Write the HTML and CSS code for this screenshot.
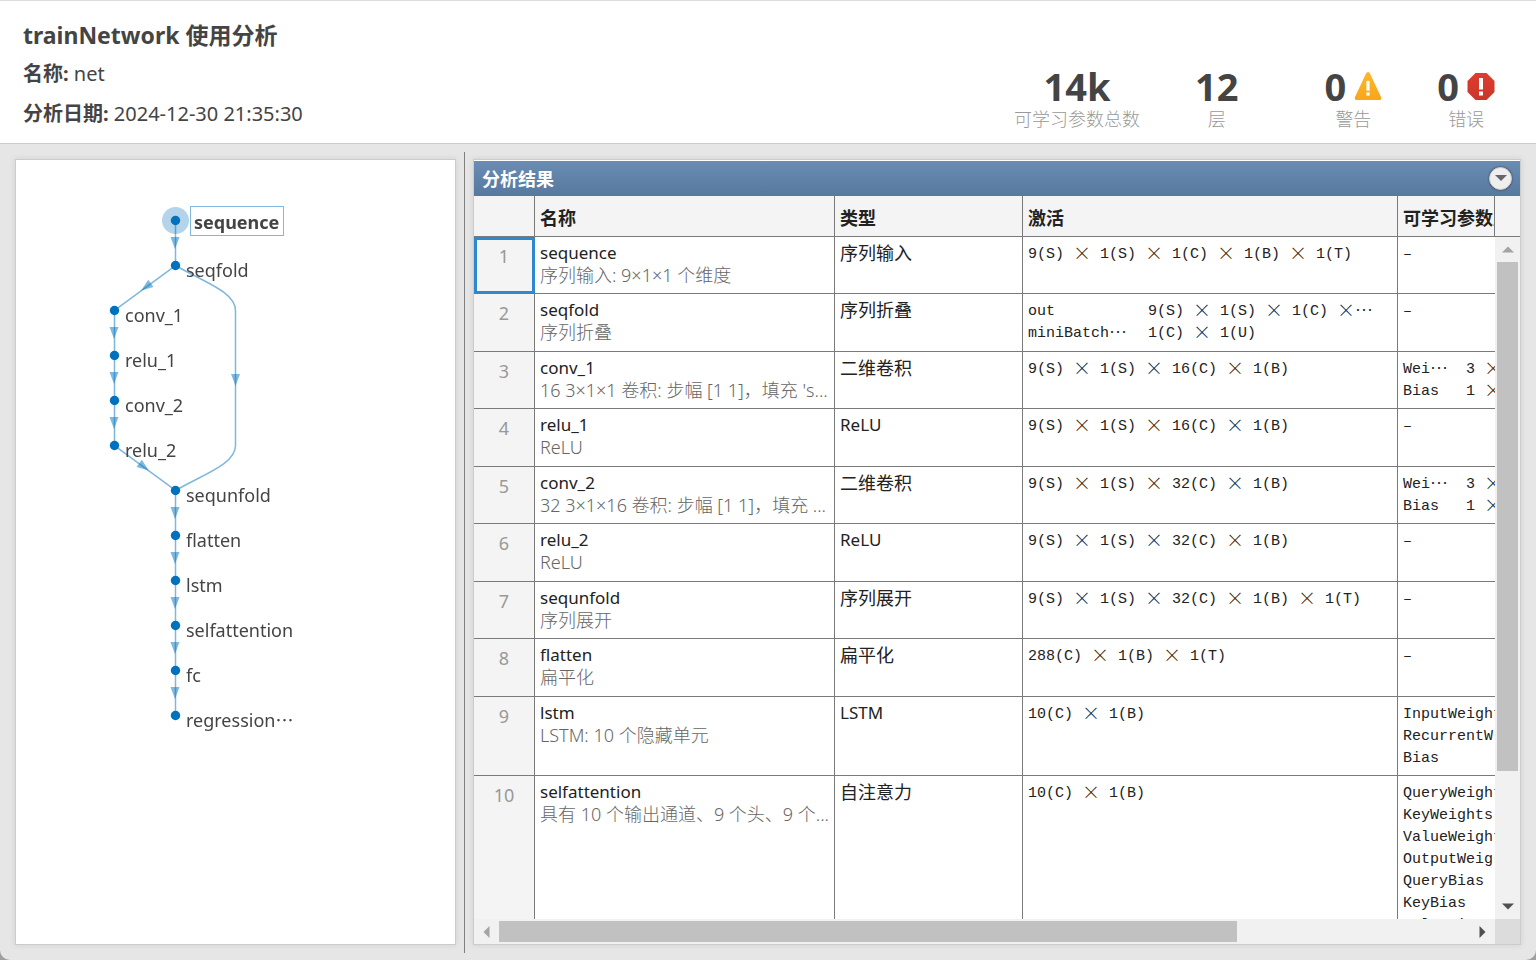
FILE: index.html
```html
<!DOCTYPE html>
<html lang="zh-CN">
<head>
  <meta charset="UTF-8">
  <title>trainNetwork 使用分析</title>
  <link rel="stylesheet" href="styles.css">
</head>
<body>
  <header class="page-header">
    <div class="info">
      <h1>trainNetwork 使用分析</h1>
      <p><b>名称:</b> net</p>
      <p><b>分析日期:</b> 2024-12-30 21:35:30</p>
    </div>
    <div class="stats">
      <div class="stat">
        <div class="stat-value">14k</div>
        <div class="stat-label">可学习参数总数</div>
      </div>
      <div class="stat">
        <div class="stat-value">12</div>
        <div class="stat-label">层</div>
      </div>
      <div class="stat stat-issues">
        <div class="stat-value">0
          <svg width="28" height="30" viewBox="0 0 28 30">
            <defs><linearGradient id="warn" x1="0" y1="0" x2="0" y2="1"><stop offset="0" stop-color="#fbb829"/><stop offset="1" stop-color="#fba51b"/></linearGradient></defs>
            <path d="M14 1q1.200 0 2 1.500L27 26q1 3-1.500 3h-23Q0 29 1 26L12 2.500Q12.800 1 14 1z" fill="url(#warn)"/>
            <path d="M12.500 10h3v9.500h-3zM12.500 21.500h3v3h-3z" fill="#fff" stroke="#fde3a8" stroke-width=".6"/>
          </svg>
        </div>
        <div class="stat-label">警告</div>
      </div>
      <div class="stat">
        <div class="stat-value">0
          <svg width="28" height="30" viewBox="0 0 28 30">
            <defs><linearGradient id="err" x1="0" y1="0" x2="0" y2="1"><stop offset="0" stop-color="#e03c2e"/><stop offset="1" stop-color="#c8372b"/></linearGradient></defs>
            <path d="M8.500 2h11L27.500 10v11l-8 8h-11l-8-8V10z" fill="url(#err)"/>
            <path d="M12 7h4v11.500h-4zM12 20.500h4v4h-4z" fill="#fff"/>
          </svg>
        </div>
        <div class="stat-label">错误</div>
      </div>
    </div>
  </header>

  <main class="content">
    <section class="graph-panel">
      <svg class="graph" width="360" height="620" viewBox="0 0 360 620">
        <defs>
          <path id="arrow" d="M-4.500-6h9L0 6z"/>
        </defs>
        <circle class="halo" cx="159.500" cy="60.500" r="13.500"/>
        <g class="edges">
          <path d="M159.500 60.500v45L98.500 150.500v135l61 45v225"/>
          <path d="M159.500 105.500C188 122 219.500 132 219.500 150.500v135C219.500 304 188 314 159.500 330.500"/>
        </g>
        <g class="arrows">
          <use href="#arrow" x="159" y="83"/>
          <use href="#arrow" transform="translate(130 127) rotate(54)"/>
          <use href="#arrow" x="98" y="173"/>
          <use href="#arrow" x="98" y="218"/>
          <use href="#arrow" x="98" y="263"/>
          <use href="#arrow" transform="translate(128 307) rotate(-54)"/>
          <use href="#arrow" x="219.500" y="220"/>
          <use href="#arrow" x="159" y="353"/>
          <use href="#arrow" x="159" y="398"/>
          <use href="#arrow" x="159" y="443"/>
          <use href="#arrow" x="159" y="488"/>
          <use href="#arrow" x="159" y="533"/>
        </g>
        <g class="nodes">
          <circle cx="159.500" cy="60.500" r="4.700"/>
          <circle cx="159.500" cy="105.500" r="4.700"/>
          <circle cx="98.500" cy="150.500" r="4.700"/>
          <circle cx="98.500" cy="195.500" r="4.700"/>
          <circle cx="98.500" cy="240.500" r="4.700"/>
          <circle cx="98.500" cy="285.500" r="4.700"/>
          <circle cx="159.500" cy="330.500" r="4.700"/>
          <circle cx="159.500" cy="375.500" r="4.700"/>
          <circle cx="159.500" cy="420.500" r="4.700"/>
          <circle cx="159.500" cy="465.500" r="4.700"/>
          <circle cx="159.500" cy="510.500" r="4.700"/>
          <circle cx="159.500" cy="555.500" r="4.700"/>
        </g>
        <rect class="label-box" x="174.500" y="46.500" width="93" height="29"/>
        <g class="labels">
          <text class="selected" x="178" y="69">sequence</text>
          <text x="170" y="117">seqfold</text>
          <text x="109" y="162">conv_1</text>
          <text x="109" y="207">relu_1</text>
          <text x="109" y="252">conv_2</text>
          <text x="109" y="297">relu_2</text>
          <text x="170" y="342">sequnfold</text>
          <text x="170" y="387">flatten</text>
          <text x="170" y="432">lstm</text>
          <text x="170" y="477">selfattention</text>
          <text x="170" y="522">fc</text>
          <text x="170" y="567">regression<tspan class="dots">…</tspan></text>
        </g>
      </svg>
    </section>

    <div class="splitter"></div>

    <section class="result-panel">
      <div class="result-title">
        <h2>分析结果</h2>
        <button class="menu-btn" aria-label="菜单"><svg width="12" height="7" viewBox="0 0 12 7"><path d="M0 0h12L6 6z" fill="#666"/></svg></button>
      </div>
      <div class="result-grid">
        <div class="table-view">
          <table>
            <colgroup><col class="c-num"><col class="c-name"><col class="c-type"><col class="c-act"><col class="c-learn"></colgroup>
            <thead>
              <tr><th></th><th>名称</th><th>类型</th><th>激活</th><th>可学习参数属性</th></tr>
            </thead>
            <tbody>
              <tr>
                <td class="num active">1</td>
                <td class="latin">sequence<small>序列输入: 9×1×1 个维度</small></td>
                <td>序列输入</td>
                <td class="mono">9(S) <i>×</i> 1(S) <i>×</i> 1(C) <i>×</i> 1(B) <i>×</i> 1(T)</td>
                <td class="mono">–</td>
              </tr>
              <tr>
                <td class="num">2</td>
                <td class="latin">seqfold<small>序列折叠</small></td>
                <td>序列折叠</td>
                <td class="mono">
                  <div class="pair"><span>out</span><span>9(S) <i>×</i> 1(S) <i>×</i> 1(C) <i>×</i><i>…</i></span></div>
                  <div class="pair"><span>miniBatch<i>…</i></span><span>1(C) <i>×</i> 1(U)</span></div>
                </td>
                <td class="mono">–</td>
              </tr>
              <tr>
                <td class="num">3</td>
                <td class="latin">conv_1<small>16 3×1×1 卷积: 步幅 [1 1]，填充 's...</small></td>
                <td>二维卷积</td>
                <td class="mono">9(S) <i>×</i> 1(S) <i>×</i> 16(C) <i>×</i> 1(B)</td>
                <td class="mono">
                  <div class="pair short"><span>Wei<i>…</i></span><span>3 <i>×</i> 1</span></div>
                  <div class="pair short"><span>Bias</span><span>1 <i>×</i> 1</span></div>
                </td>
              </tr>
              <tr>
                <td class="num">4</td>
                <td class="latin">relu_1<small>ReLU</small></td>
                <td class="latin">ReLU</td>
                <td class="mono">9(S) <i>×</i> 1(S) <i>×</i> 16(C) <i>×</i> 1(B)</td>
                <td class="mono">–</td>
              </tr>
              <tr>
                <td class="num">5</td>
                <td class="latin">conv_2<small>32 3×1×16 卷积: 步幅 [1 1]，填充 ...</small></td>
                <td>二维卷积</td>
                <td class="mono">9(S) <i>×</i> 1(S) <i>×</i> 32(C) <i>×</i> 1(B)</td>
                <td class="mono">
                  <div class="pair short"><span>Wei<i>…</i></span><span>3 <i>×</i> 1</span></div>
                  <div class="pair short"><span>Bias</span><span>1 <i>×</i> 1</span></div>
                </td>
              </tr>
              <tr>
                <td class="num">6</td>
                <td class="latin">relu_2<small>ReLU</small></td>
                <td class="latin">ReLU</td>
                <td class="mono">9(S) <i>×</i> 1(S) <i>×</i> 32(C) <i>×</i> 1(B)</td>
                <td class="mono">–</td>
              </tr>
              <tr>
                <td class="num">7</td>
                <td class="latin">sequnfold<small>序列展开</small></td>
                <td>序列展开</td>
                <td class="mono">9(S) <i>×</i> 1(S) <i>×</i> 32(C) <i>×</i> 1(B) <i>×</i> 1(T)</td>
                <td class="mono">–</td>
              </tr>
              <tr>
                <td class="num">8</td>
                <td class="latin">flatten<small>扁平化</small></td>
                <td>扁平化</td>
                <td class="mono">288(C) <i>×</i> 1(B) <i>×</i> 1(T)</td>
                <td class="mono">–</td>
              </tr>
              <tr>
                <td class="num">9</td>
                <td class="latin">lstm<small>LSTM: 10 个隐藏单元</small></td>
                <td class="latin">LSTM</td>
                <td class="mono">10(C) <i>×</i> 1(B)</td>
                <td class="mono">InputWeights<br>RecurrentW<i>…</i><br>Bias</td>
              </tr>
              <tr>
                <td class="num">10</td>
                <td class="latin">selfattention<small>具有 10 个输出通道、9 个头、9 个...</small></td>
                <td>自注意力</td>
                <td class="mono">10(C) <i>×</i> 1(B)</td>
                <td class="mono">QueryWeights<br>KeyWeights<br>ValueWeights<br>OutputWeig<i>…</i><br>QueryBias<br>KeyBias<br>ValueBias<br>OutputBias</td>
              </tr>
            </tbody>
          </table>
        </div>
        <div class="head-filler"></div>
        <div class="vscroll">
          <button aria-label="向上滚动"><svg width="12" height="7" viewBox="0 0 12 7"><path d="M0 6.500h12L6 .5z" fill="#a3a3a3"/></svg></button>
          <div class="track"><div class="thumb"></div></div>
          <button aria-label="向下滚动"><svg width="12" height="7" viewBox="0 0 12 7"><path d="M0 .5h12L6 6.500z" fill="#505050"/></svg></button>
        </div>
        <div class="hscroll">
          <button aria-label="向左滚动"><svg width="7" height="12" viewBox="0 0 7 12"><path d="M6.500 0v12L.5 6z" fill="#a3a3a3"/></svg></button>
          <div class="track"><div class="thumb"></div></div>
          <button aria-label="向右滚动"><svg width="7" height="12" viewBox="0 0 7 12"><path d="M.5 0v12l6-6z" fill="#505050"/></svg></button>
        </div>
        <div class="corner"></div>
      </div>
    </section>
  </main>
</body>
</html>
```
FILE: styles.css
```css
* {
  box-sizing: border-box;
}

html {
  background: #a0a0a0;
}

body {
  margin: 0;
  height: 100vh;
  display: flex;
  flex-direction: column;
  overflow: hidden;
  font-family: "Noto Sans", "Noto Sans CJK SC", sans-serif;
  font-size: 18px;
  line-height: 22px;
  color: #444;
  background: #e6e6e6;
  border-radius: 0 0 10px 10px;
}

h1, h2, p {
  margin: 0;
}

button {
  border: none;
  padding: 0;
  display: flex;
  align-items: center;
  justify-content: center;
  background: none;
}

svg {
  display: block;
}

/* header */
.page-header {
  display: flex;
  justify-content: space-between;
  height: 144px;
  padding: 20px 41px 0 23px;
  background: #fff;
  border-top: 1px solid #ddd;
  border-bottom: 1px solid #ccc;
}

.info h1 {
  margin-bottom: 5px;
  font-size: 23px;
  line-height: 28px;
}

.info p {
  font-size: 20px;
  line-height: 40px;
}

.stats {
  display: flex;
  gap: 55px;
  padding-top: 43px;
}

.stat {
  display: flex;
  flex-direction: column;
  align-items: center;
}

.stat-issues {
  margin-left: 31px;
}

.stat-value {
  display: flex;
  align-items: center;
  gap: 8px;
  font-size: 38px;
  font-weight: bold;
  line-height: 44px;
}

.stat-label {
  font-weight: 300;
  color: #999;
}

/* panels */
.content {
  flex: 1;
  display: flex;
  min-height: 0;
  padding: 8px 15px 7px;
}

.graph-panel,
.result-panel {
  margin: 7px 0 8px;
  background: #fff;
  border: 1px solid #ccc;
  box-shadow: 0 0 6px rgba(0, 0, 0, 0.1);
}

.graph-panel {
  flex: 0 0 441px;
}

.splitter {
  flex: 0 0 1px;
  margin: 0 8px;
  background: #808080;
}

.result-panel {
  flex: 1;
  min-width: 0;
  display: flex;
  flex-direction: column;
  padding-top: 1px;
}

/* network graph */
.halo {
  fill: #b3d4ea;
}

.edges {
  fill: none;
  stroke: #0072bd;
  stroke-width: 1.5;
  opacity: 0.5;
}

.arrows {
  fill: #0072bd;
  opacity: 0.5;
}

.nodes {
  fill: #0072bd;
}

.label-box {
  fill: #fff;
  stroke: #80b8de;
}

.labels {
  font-size: 18px;
  fill: #444;
}

.selected {
  font-weight: bold;
}

.dots {
  font-family: "Noto Sans CJK SC", sans-serif;
}

/* results */
.result-title {
  display: flex;
  align-items: center;
  justify-content: space-between;
  height: 35px;
  padding: 0 8px;
  color: #fff;
  background: linear-gradient(#6a8db4, #57789f);
}

.result-title h2 {
  font-size: 18px;
}

.menu-btn {
  width: 23px;
  height: 23px;
  border: 1px solid #ccc;
  border-radius: 50%;
  background: #eee;
  box-shadow: 0 0 2px #333;
}

.result-grid {
  flex: 1;
  min-height: 0;
  display: grid;
  grid-template-columns: 1fr 25px;
  grid-template-rows: 41px 1fr 25px;
}

.table-view {
  grid-row: 1 / 3;
  min-width: 0;
  overflow: hidden;
}

table {
  width: 1324px;
  table-layout: fixed;
  border-spacing: 0;
  color: #222;
}

.c-num { width: 61px; }
.c-name { width: 300px; }
.c-type { width: 188px; }
.c-act { width: 375px; }
.c-learn { width: 400px; }

th, td {
  padding: 5px 5px 0;
  border-right: 1px solid #7a7a7a;
  border-bottom: 1px solid #7a7a7a;
  text-align: left;
  vertical-align: top;
  white-space: nowrap;
}

th {
  height: 41px;
  padding-top: 11px;
  background: #f4f4f4;
}

td {
  height: 57px;
}

tr:nth-child(even) td {
  height: 58px;
}

tr:nth-child(9) td {
  height: 79px;
}

.latin {
  font-size: 17px;
}

small {
  display: block;
  font-size: 18px;
  font-weight: 300;
  color: #666;
}

td.num {
  padding-top: 8px;
  text-align: center;
  color: #999;
  background: #f4f4f4;
}

td.active {
  outline: 3px solid #2f88ce;
  outline-offset: -3px;
}

td.mono {
  padding-top: 7px;
  font-family: "Liberation Mono", monospace;
  font-size: 15px;
}

.mono i {
  font-family: "Noto Sans CJK SC", sans-serif;
  font-style: normal;
  font-weight: 300;
  font-size: 18px;
  line-height: 1px;
  vertical-align: -2px;
}

.pair {
  display: grid;
  grid-template-columns: 99px 1fr;
  gap: 21px;
}

.pair.short {
  grid-template-columns: 45px 1fr;
  gap: 18px;
}

.head-filler {
  grid-column: 2;
  grid-row: 1;
  margin-left: -1px;
  background: #f4f4f4;
  border-bottom: 1px solid #7a7a7a;
  border-left: 1px solid #7a7a7a;
}

.vscroll,
.hscroll {
  display: flex;
  background: #f1f1f1;
}

.vscroll {
  grid-column: 2;
  grid-row: 2;
  flex-direction: column;
  padding: 0 2px;
}

.vscroll button {
  height: 25px;
}

.hscroll {
  padding: 2px 0;
}

.hscroll button {
  width: 25px;
}

.track {
  flex: 1;
}

.thumb {
  background: #c1c1c1;
}

.vscroll .thumb {
  height: 80.5%;
}

.hscroll .thumb {
  width: 76%;
  height: 100%;
}

.corner {
  background: #dcdcdc;
}
```
